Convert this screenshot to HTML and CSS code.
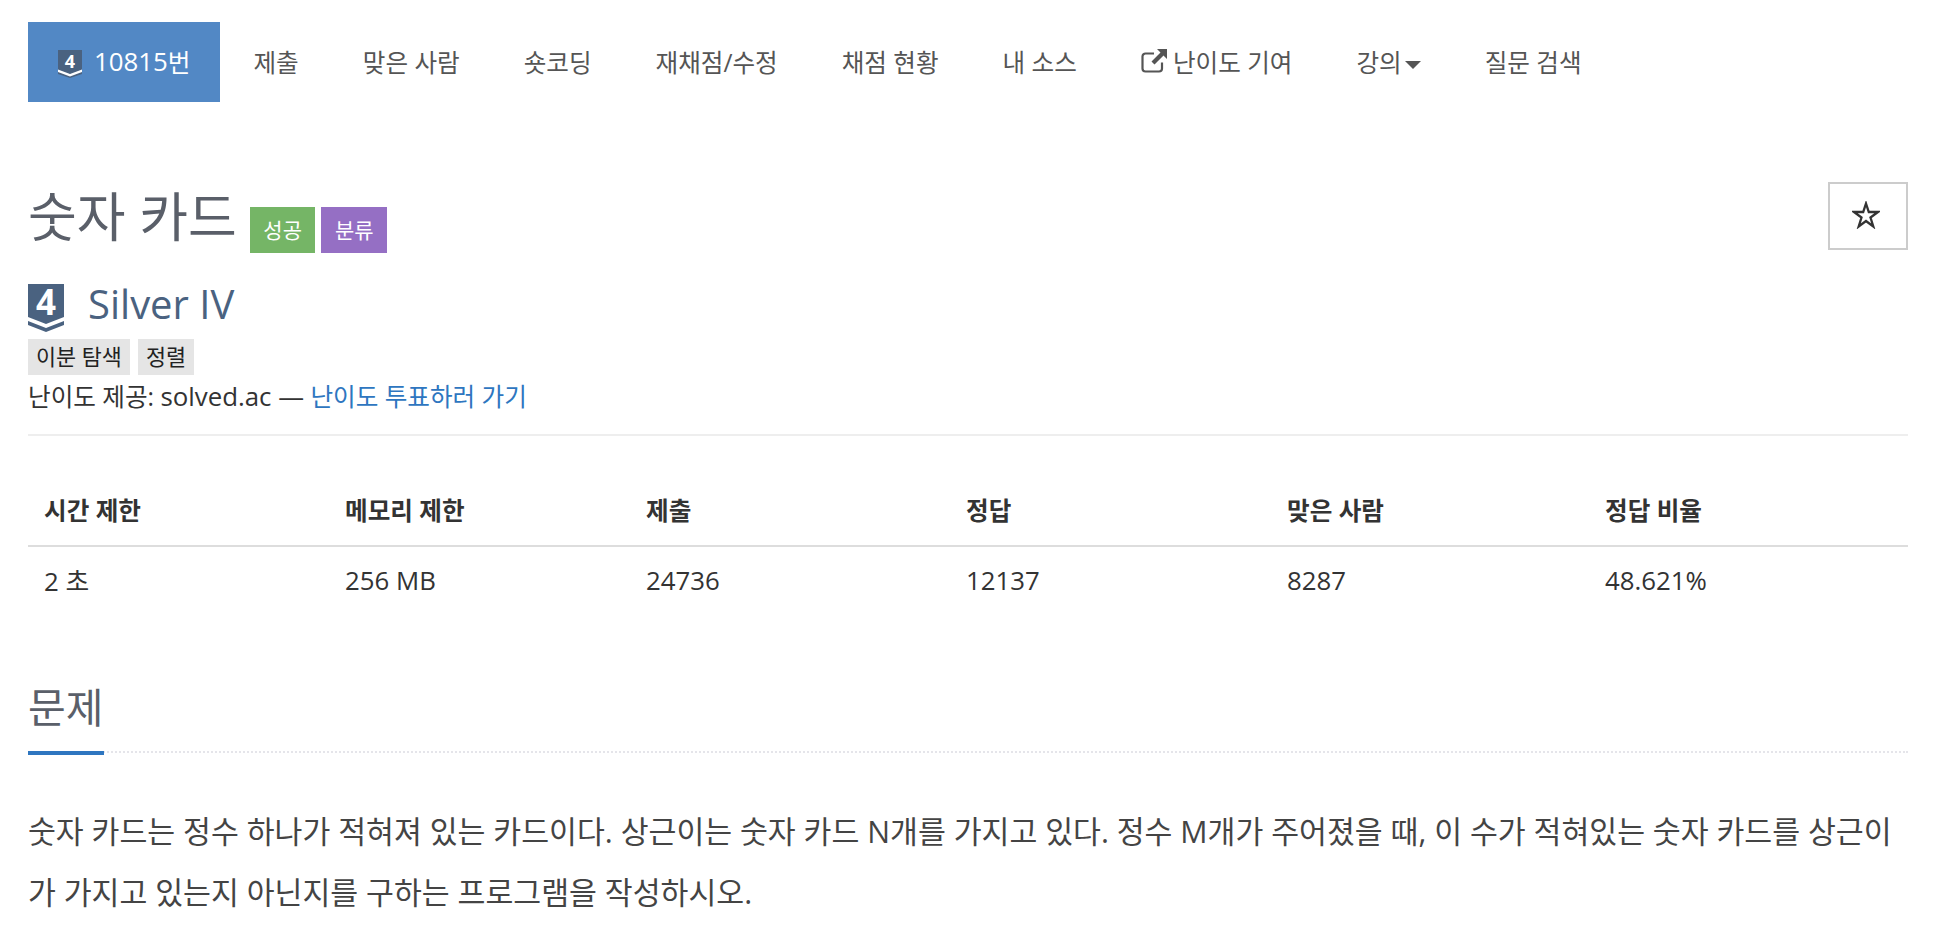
FILE: index.html
```html
<!DOCTYPE html>
<html lang="ko">
<head>
<meta charset="utf-8">
<title>숫자 카드</title>
<link rel="stylesheet" href="styles.css">
</head>
<body>
<nav class="nav">
  <a class="nav-item active"><svg class="tier-small" viewBox="0 0 24 28"><path class="tier-body" d="M0 0H24V24L12 28L0 24Z"/><path class="tier-chev-light" d="M0 19.500L12 24L24 19.500V22L12 26.500L0 22Z"/><text x="12" y="18" text-anchor="middle" class="tier-num">4</text></svg><span class="lat">10815</span>번</a>
  <a class="nav-item">제출</a>
  <a class="nav-item">맞은 사람</a>
  <a class="nav-item">숏코딩</a>
  <a class="nav-item">재채점/수정</a>
  <a class="nav-item">채점 현황</a>
  <a class="nav-item">내 소스</a>
  <a class="nav-item"><svg class="ext" viewBox="0 0 26 24"><path d="M21 13.500V19.500a3 3 0 0 1-3 3H4.500a3 3 0 0 1-3-3V7.500a3 3 0 0 1 3-3H13" fill="none" stroke="currentColor" stroke-width="2.200"/><path d="M16 0H26V10L22.500 6.500L13.500 15.500L10.500 12.500L19.500 3.500Z" fill="currentColor"/></svg>난이도 기여</a>
  <a class="nav-item">강의<span class="caret"></span></a>
  <a class="nav-item">질문 검색</a>
</nav>
<main class="page">
  <header class="title-row">
    <div class="title-left">
      <h1 class="title">숫자 카드</h1>
      <span class="label green">성공</span>
      <span class="label purple">분류</span>
    </div>
    <button class="star-btn"><svg viewBox="0 0 28 28"><path d="M14 2.500L16.800 11H26L18.500 16.500L21.300 25.500L14 20L6.700 25.500L9.500 16.500L2 11H11.200Z" fill="none" stroke="#333" stroke-width="2.300"/></svg></button>
  </header>
  <div class="tier-row">
    <svg class="tier-big" viewBox="0 0 36 48"><path class="tier-body" d="M0 0H36V33L18 40L0 33Z"/><path class="tier-body" d="M0 37L18 44L36 37V41L18 48L0 41Z"/><text x="18" y="31" text-anchor="middle" class="tier-num">4</text></svg>
    <span class="tier-name">Silver IV</span>
  </div>
  <div class="tags"><span class="tag">이분 탐색</span><span class="tag">정렬</span></div>
  <p class="credit">난이도 제공: <span class="lat">solved.ac —</span> <a class="link">난이도 투표하러 가기</a></p>
  <table class="info">
    <thead><tr><th class="c1">시간 제한</th><th class="c1">메모리 제한</th><th class="c3">제출</th><th class="c4">정답</th><th class="c5">맞은 사람</th><th>정답 비율</th></tr></thead>
    <tbody><tr><td>2 초</td><td>256 MB</td><td>24736</td><td>12137</td><td>8287</td><td>48.621%</td></tr></tbody>
  </table>
  <section>
    <div class="head-line"><h2 class="section-title">문제</h2></div>
    <p class="body-text">숫자 카드는 정수 하나가 적혀져 있는 카드이다. 상근이는 숫자 카드 N개를 가지고 있다. 정수 M개가 주어졌을 때, 이 수가 적혀있는 숫자 카드를 상근이가 가지고 있는지 아닌지를 구하는 프로그램을 작성하시오.</p>
  </section>
</main>
</body>
</html>
```
FILE: styles.css
```css
* { box-sizing: border-box; }
html, body { margin: 0; padding: 0; overflow: hidden; }
body {
  background: #fff;
  color: #333;
  font-family: "Open Sans", "Noto Sans CJK KR", sans-serif;
  font-size: 24.600px;
  height: 952px;
}
.lat { font-size: 1.050em; }
.nav { display: flex; margin: 22px 28px 0; height: 80px; }
.nav-item {
  display: flex;
  align-items: center;
  padding: 0 32px 3px;
  color: #555;
  white-space: nowrap;
}
.nav-item.active {
  background: #5288c5;
  color: #fff;
  padding: 0 30px 3px 30px;
  margin-right: 1px;
}
.tier-small { width: 24px; height: 28px; margin-right: 12px; margin-top: 7px; overflow: visible; }
.tier-body { fill: #4a6280; }
.tier-chev-light { fill: #fff; }
.tier-num { fill: #fff; font: 700 18px "Open Sans", sans-serif; }
.tier-big { overflow: visible; }
.tier-big .tier-num { font-size: 35px; }
.ext { width: 26px; height: 24px; margin-right: 6px; }
.caret {
  margin-left: 3px;
  margin-top: 9px;
  border-top: 8px solid #555;
  border-left: 8px solid transparent;
  border-right: 8px solid transparent;
}
.page { margin: 0 44px 0 28px; }
.title-row { display: flex; justify-content: space-between; align-items: flex-start; margin-top: 80px; height: 70px; }
.title-left { display: flex; align-items: flex-start; }
.title { margin: 1px 13px 0 0; font-size: 53px; line-height: 68px; font-weight: 400; color: #5a5f69; }
.label {
  height: 46px;
  line-height: 46px;
  padding: 0 13.500px;
  margin: 25px 6px 0 0;
  font-size: 21px;
  color: #fff;
}
.green { background: #75b566; }
.purple { background: #956fc4; }
.star-btn {
  width: 80px;
  height: 68px;
  background: #fff;
  border: 2px solid #ccc;
  padding: 0 4px 3px 0;
  display: flex;
  align-items: center;
  justify-content: center;
}
.star-btn svg { width: 28px; height: 28px; }
.tier-row { display: flex; align-items: center; margin-top: 32px; height: 48px; }
.tier-big { width: 36px; height: 48px; margin-right: 24px; }
.tier-name { font-size: 40px; color: #4a6280; margin-top: -10px; }
.tags { display: flex; gap: 8px; margin-top: 7px; }
.tag { background: #e5e5e5; color: #222; height: 36px; line-height: 36px; padding: 0 8px; font-size: 21.800px; }
.credit { margin: 5px 0 0; padding-bottom: 21px; border-bottom: 2px solid #eee; line-height: 32px; color: #333; }
.link { color: #2e76c0; }
.info { width: 100%; border-collapse: collapse; margin-top: 39px; table-layout: fixed; }
.info th, .info td { text-align: left; padding: 0 16px 3px; }
.info th { height: 71px; font-weight: 700; border-bottom: 2px solid #ddd; color: #333; }
.info td { height: 70px; font-size: 25.800px; }
.c1 { width: 301px; }
.c3 { width: 320px; }
.c4 { width: 321px; }
.c5 { width: 318px; }
.head-line {
  display: flex;
  align-items: flex-start;
  margin-top: 63px;
  border-bottom: 2px dotted #e5e5ea;
  height: 74px;
}
.section-title {
  flex: none;
  margin: 0;
  height: 76px;
  font-size: 41px;
  line-height: 56px;
  font-weight: 400;
  color: #5a5f69;
  border-bottom: 4px solid #2e76c0;
  padding-right: 1px;
}
.body-text { margin: 48px 0 0; font-size: 30.300px; line-height: 61px; color: #444; }
```
